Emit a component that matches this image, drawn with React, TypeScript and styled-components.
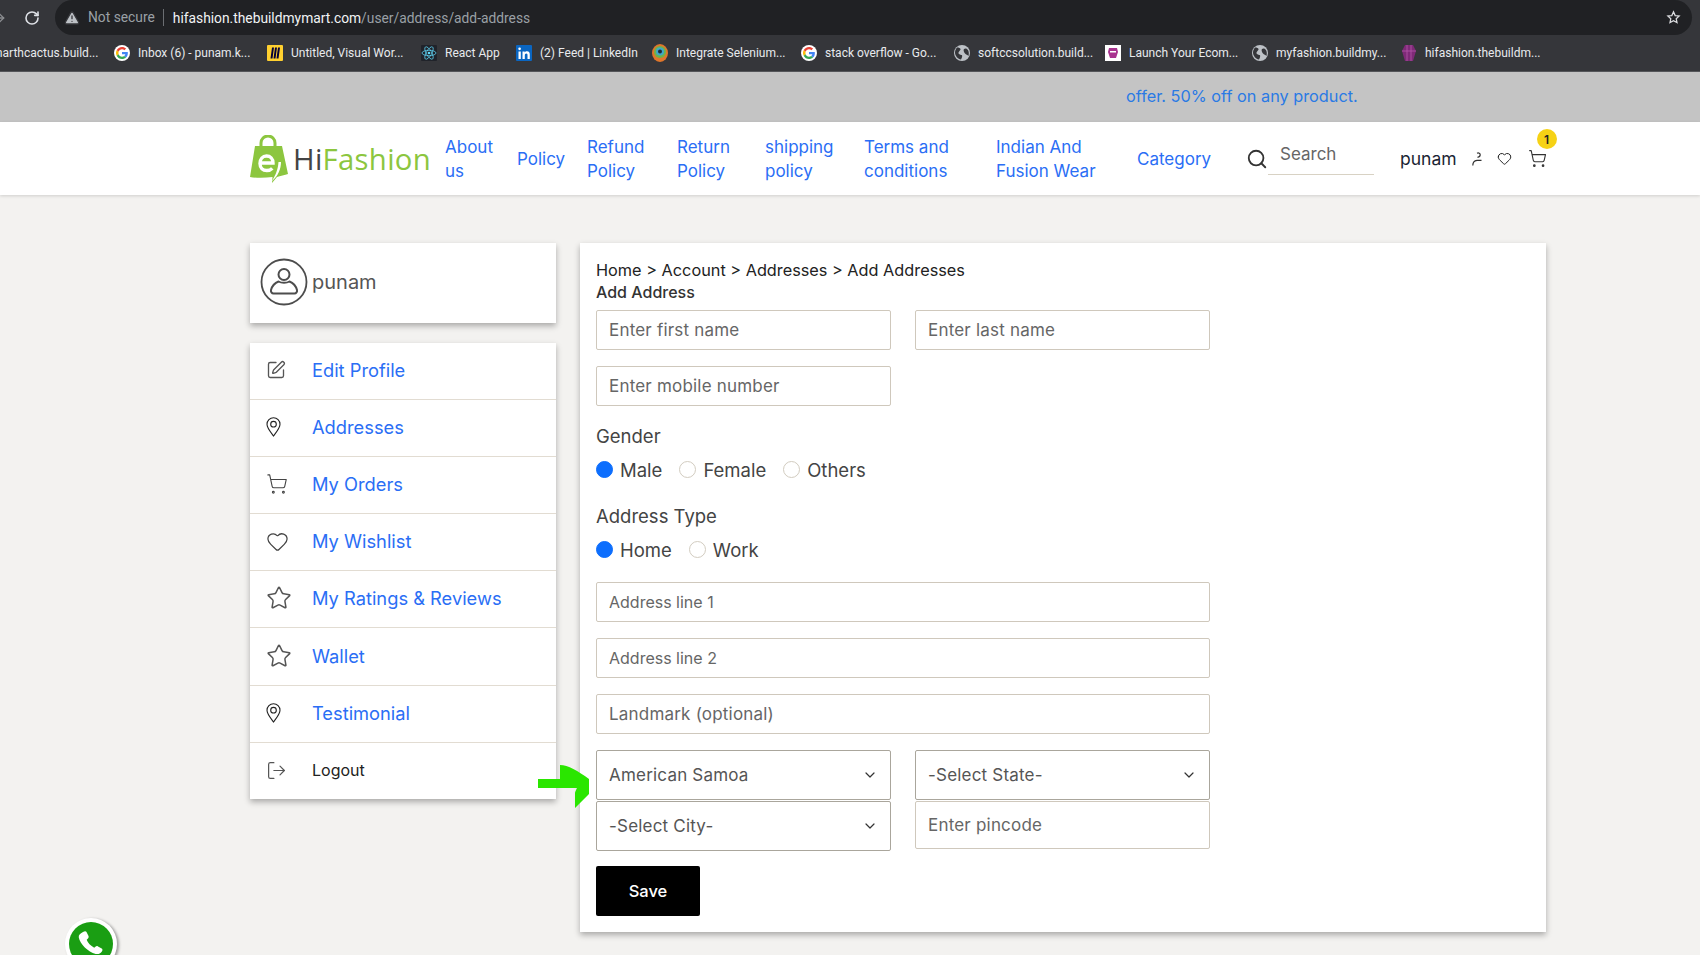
import React from 'react';
import styled, { createGlobalStyle } from 'styled-components';
import { Star, LogOut, SquarePen, RotateCw, TriangleAlert, ArrowRight, Heart, ShoppingCart, ChevronDown, Search } from 'lucide-react';

const font = `Inter, "Noto Sans", sans-serif`;

const GlobalStyle = createGlobalStyle`
  html, body { margin: 0; padding: 0; height: 955px; overflow: hidden; }
  body { background: #f3f2f0; font-family: ${font}; }
  * { box-sizing: border-box; }
`;

const GoogleIcon = () => (
  <svg width="16" height="16" viewBox="0 0 48 48">
    <circle cx="24" cy="24" r="24" fill="#fff" />
    <path fill="#EA4335" d="M24 13c3 0 5.400 1 7.300 2.800l5-5C33.200 7.900 29 6 24 6 17 6 10.900 10 8 15.900l5.900 4.600C15.300 16.200 19.300 13 24 13z" />
    <path fill="#4285F4" d="M41.500 24.500c0-1.300-.1-2.300-.3-3.500H24v6.800h10c-.4 2.200-1.700 4.100-3.600 5.300l5.700 4.400c3.400-3.100 5.400-7.600 5.400-13z" />
    <path fill="#FBBC05" d="M13.900 27.500c-.9-2.300-.9-4.700 0-7L8 15.900c-2.600 5-2.600 11.200 0 16.200z" />
    <path fill="#34A853" d="M24 42c4.900 0 9-1.600 12.100-4.500l-5.700-4.400c-1.600 1.100-3.700 1.800-6.400 1.800-4.700 0-8.700-3.200-10.100-7.400L8 32.100C10.900 38 17 42 24 42z" />
  </svg>
);

const MiroIcon = () => (
  <svg width="16" height="16" viewBox="0 0 16 16">
    <rect width="16" height="16" rx="1" fill="#ffd02f" />
    <path d="M5 2.500h2L5.500 13.500h-2L5 2.500zm3 0h2L8.500 13.500h-2L8 2.500zm3 0h2l-1.500 11h-2l1.500-11z" fill="#050038" />
  </svg>
);

const ReactIcon = () => (
  <svg width="16" height="16" viewBox="0 0 16 16">
    <rect width="16" height="16" rx="1" fill="#20232a" />
    <g fill="none" stroke="#61dafb" strokeWidth="0.7">
      <ellipse cx="8" cy="8" rx="7" ry="2.700" />
      <ellipse cx="8" cy="8" rx="7" ry="2.700" transform="rotate(60 8 8)" />
      <ellipse cx="8" cy="8" rx="7" ry="2.700" transform="rotate(120 8 8)" />
    </g>
    <circle cx="8" cy="8" r="1.300" fill="#61dafb" />
  </svg>
);

const LinkedInIcon = () => (
  <svg width="16" height="16" viewBox="0 0 16 16">
    <rect width="16" height="16" rx="1" fill="#0a66c2" />
    <path d="M2.500 6.500h2.300V14H2.500V6.500zM3.600 2.500a1.300 1.300 0 1 1 0 2.700 1.300 1.300 0 0 1 0-2.700zM6.500 6.500h2.200v1c.4-.7 1.200-1.200 2.300-1.200 2.200 0 2.800 1.400 2.800 3.400V14h-2.300v-3.800c0-1-.2-1.800-1.200-1.800s-1.500.8-1.500 1.800V14H6.500V6.500z" fill="#fff" />
  </svg>
);

const SeleniumIcon = () => (
  <svg width="16" height="18" viewBox="0 0 16 18">
    <ellipse cx="8" cy="9" rx="8" ry="9" fill="#e0762b" />
    <circle cx="8" cy="8" r="6" fill="#6fb24a" />
    <circle cx="8" cy="7.500" r="4" fill="#3fa6c9" />
    <circle cx="8" cy="7.500" r="2" fill="#1c2a3a" />
  </svg>
);

const GlobeIcon = () => (
  <svg width="16" height="16" viewBox="0 0 16 16">
    <circle cx="8" cy="8" r="8" fill="#bdc1c6" />
    <path d="M3 2.500c2 0 3 .5 3.500 1.500S5 6 4.500 7.500 6.500 10 7.500 10s1 2-.5 4.500C4 14 1 11 1 7.500c0-2 1-4 2-5zM10 4c1.500-1 3-.5 4 1 1 2 1 4 .5 6-1-1-2.500-1.500-3.500-2.500S9 5 10 4z" fill="#35363a" />
  </svg>
);

const LaunchIcon = () => (
  <svg width="16" height="16" viewBox="0 0 16 16">
    <rect width="16" height="16" fill="#fff" />
    <path d="M4 3h8l1 4-2 6H5L3 7l1-4z" fill="#a8338f" />
    <rect x="5" y="6" width="6" height="1.500" fill="#fff" />
  </svg>
);

const ShopIcon = () => (
  <svg width="16" height="18" viewBox="0 0 16 18">
    <path d="M4 1h8l3 6-3 10H4L1 7l3-6z" fill="#7f2a78" />
    <path d="M6 1v16M10 1v16M1 7h14" stroke="#b455a8" strokeWidth="0.800" />
  </svg>
);

const StarOutline = () => (
  <svg width="15" height="15" viewBox="0 0 24 24" fill="none" stroke="#dcdde0" strokeWidth="2">
    <path d="M12 3l2.700 5.900 6.300.7-4.700 4.300 1.300 6.300L12 17.100l-5.600 3.100 1.300-6.300L3 9.600l6.300-.7L12 3z" />
  </svg>
);

const Logo = () => (
  <LogoWrap>
    <svg width="38" height="48" viewBox="0 0 38 48">
      <path d="M11 14V8a7 7 0 0 1 14 0v6" fill="none" stroke="#8cc63f" strokeWidth="3" />
      <path d="M5 11h27l6 28c-3 1-8 2-11 3l-5 6 .5-6C15 43 6 43 0 42L5 11z" fill="#8cc63f" />
      <path d="M31 27c0 7-3 14-9 19 3-5 6-11 6.500-19H31z" fill="#fff" />
      <path d="M10 28h13c0-4.500-2.700-7-6.500-7S10 24 10 28.500s2.800 7 6.800 7c2.300 0 4.200-.8 5.500-2.200" fill="none" stroke="#fff" strokeWidth="3.400" />
    </svg>
    <LogoText>Hi<LogoAccent>Fashion</LogoAccent></LogoText>
  </LogoWrap>
);

const AvatarIcon = () => (
  <svg width="48" height="48" viewBox="0 0 48 48" fill="none" stroke="#4d4d4d" strokeWidth="1.800">
    <circle cx="24" cy="24" r="22.500" />
    <circle cx="24" cy="16.500" r="5.500" strokeWidth="2" />
    <path d="M18.500 23.500c-4 1.500-6.500 5-7.500 8.500-.4 1.700.8 3.500 2.500 3.500h21c1.700 0 2.900-1.800 2.500-3.500-1-3.500-3.500-7-7.500-8.500-3 1.800-8 1.800-11 0z" strokeWidth="2" />
  </svg>
);

const PinIcon = () => (
  <svg width="15" height="20" viewBox="0 0 15 20" fill="none" stroke="#222" strokeWidth="1.100">
    <path d="M7.500 19C4.500 15 1 11 1 7.300a6.500 6.500 0 0 1 13 0C14 11 10.500 15 7.500 19z" />
    <circle cx="7.500" cy="7.200" r="2.800" />
  </svg>
);

const GreenArrow = () => (
  <ArrowMark width="51" height="43" viewBox="0 0 51 43">
    <path d="M22 0c8 0 18 6 29 14v15L37 43V28c0-1 1-3 2-5H0V14h22V0z" fill="#2ae600" />
  </ArrowMark>
);

const WhatsAppBadge = () => (
  <WhatsApp>
    <svg width="44" height="44" viewBox="0 0 44 44">
      <circle cx="22" cy="22" r="22" fill="#1a9e13" />
      <path d="M14 10c1.500-1 3-1 3.500 0l2 4c.4 1 0 2-.8 2.800l-1 1c1 3 4 6 7.500 8l1.200-1.100c.8-.7 1.800-.8 2.600-.3l3.700 2.200c1 .6 1 2 0 3.200-1.500 1.800-3.500 2.700-6 2.100C19 30 11 22 9.800 15.500 9.400 13 11 11.500 14 10z" fill="#fff" />
    </svg>
  </WhatsApp>
);

const bookmarks = [
  { icon: <GoogleIcon />, label: 'Inbox (6) - punam.k...', w: 153 },
  { icon: <MiroIcon />, label: 'Untitled, Visual Wor...', w: 154 },
  { icon: <ReactIcon />, label: 'React App', w: 95 },
  { icon: <LinkedInIcon />, label: '(2) Feed | LinkedIn', w: 136 },
  { icon: <SeleniumIcon />, label: 'Integrate Selenium...', w: 149 },
  { icon: <GoogleIcon />, label: 'stack overflow - Go...', w: 153 },
  { icon: <GlobeIcon />, label: 'softccsolution.build...', w: 151 },
  { icon: <LaunchIcon />, label: 'Launch Your Ecom...', w: 147 },
  { icon: <GlobeIcon />, label: 'myfashion.buildmy...', w: 149 },
  { icon: <ShopIcon />, label: 'hifashion.thebuildm...', w: 140 },
];

const navItems = [
  { label: 'About us', w: 72 },
  { label: 'Policy', w: 70 },
  { label: 'Refund Policy', w: 90 },
  { label: 'Return Policy', w: 88 },
  { label: 'shipping policy', w: 99 },
  { label: 'Terms and conditions', w: 132 },
  { label: 'Indian And Fusion Wear', w: 141 },
  { label: 'Category', w: 109 },
];

const menu = [
  { icon: <SquarePen size={20} color="#555" strokeWidth={1.6} />, label: 'Edit Profile' },
  { icon: <PinIcon />, label: 'Addresses' },
  { icon: <ShoppingCart size={22} color="#444" strokeWidth={1.2} />, label: 'My Orders' },
  { icon: <Heart size={23} color="#444" strokeWidth={1.3} />, label: 'My Wishlist' },
  { icon: <Star size={26} color="#555" strokeWidth={1.4} />, label: 'My Ratings & Reviews' },
  { icon: <Star size={26} color="#555" strokeWidth={1.4} />, label: 'Wallet', tall: true },
  { icon: <PinIcon />, label: 'Testimonial' },
  { icon: <LogOut size={21} color="#555" strokeWidth={1.4} />, label: 'Logout', dark: true },
];

const App: React.FC = () => {
  return (
    <>
      <GlobalStyle />
      <Toolbar>
        <ForwardArrow><ArrowRight size={16} color="#8b8d90" /></ForwardArrow>
        <RotateCw size={16} color="#dee1e6" strokeWidth={2.4} />
        <AddressBar>
          <TriangleAlert size={16} color="#35363a" fill="#bdc1c6" />
          <NotSecure>Not secure</NotSecure>
          <UrlHost>hifashion.thebuildmymart.com<UrlPath>/user/address/add-address</UrlPath></UrlHost>
          <StarSlot><StarOutline /></StarSlot>
        </AddressBar>
      </Toolbar>
      <BookmarkBar>
        <FirstBookmark>marthcactus.build...</FirstBookmark>
        {bookmarks.map((b) => (
          <Bookmark key={b.label} $w={b.w}>
            {b.icon}
            <span>{b.label}</span>
          </Bookmark>
        ))}
      </BookmarkBar>
      <Banner>offer. 50% off on any product.</Banner>
      <Header>
        <HeaderInner>
          <Logo />
          <Nav>
            {navItems.map((n) => (
              <NavItem key={n.label} $w={n.w}>{n.label}</NavItem>
            ))}
          </Nav>
          <SearchBox>
            <Search size={24} color="#333" strokeWidth={2} />
            <SearchInput placeholder="Search" />
          </SearchBox>
          <UserName>punam</UserName>
          <UserIcon width="10" height="14" viewBox="0 0 10 14" fill="none" stroke="#333" strokeWidth="1.200">
            <path d="M5 1.200c1.800-.7 3.200.3 3.200 1.600S7 5.200 5.500 5.400" />
            <path d="M.8 13.500c0-3 1.600-5 4.200-5.200h4.500" />
          </UserIcon>
          <HeartSlot><Heart size={15} color="#222" strokeWidth={1.6} /></HeartSlot>
          <CartSlot>
            <ShoppingCart size={19} color="#333" strokeWidth={1.4} />
            <CartBadge>1</CartBadge>
          </CartSlot>
        </HeaderInner>
      </Header>
      <Content>
        <Sidebar>
          <ProfileCard>
            <AvatarIcon />
            <ProfileName>punam</ProfileName>
          </ProfileCard>
          <MenuCard>
            {menu.map((m) => (
              <MenuRow key={m.label} $tall={m.tall}>
                <MenuIcon>{m.icon}</MenuIcon>
                <MenuLabel $dark={m.dark}>{m.label}</MenuLabel>
              </MenuRow>
            ))}
          </MenuCard>
        </Sidebar>
        <MainCard>
          <Crumbs>Home &gt; Account &gt; Addresses &gt; Add Addresses</Crumbs>
          <Title>Add Address</Title>
          <FieldRow>
            <Field placeholder="Enter first name" />
            <Field placeholder="Enter last name" />
          </FieldRow>
          <FieldRow>
            <Field placeholder="Enter mobile number" />
          </FieldRow>
          <GroupLabel>Gender</GroupLabel>
          <RadioRow>
            <RadioOption $on>Male</RadioOption>
            <RadioOption>Female</RadioOption>
            <RadioOption>Others</RadioOption>
          </RadioRow>
          <GroupLabel>Address Type</GroupLabel>
          <RadioRow>
            <RadioOption $on>Home</RadioOption>
            <RadioOption>Work</RadioOption>
          </RadioRow>
          <WideStack>
            <WideField $tight placeholder="Address line 1" />
            <WideField $tight placeholder="Address line 2" />
            <WideField placeholder="Landmark (optional)" />
          </WideStack>
          <SelectGrid>
            <ArrowHolder>
              <GreenArrow />
              <SelectBox><SelectText>American Samoa</SelectText><ChevronDown size={16} color="#333" strokeWidth={1.8} /></SelectBox>
            </ArrowHolder>
            <SelectBox><SelectText>-Select State-</SelectText><ChevronDown size={16} color="#333" strokeWidth={1.8} /></SelectBox>
            <SelectBox><SelectText>-Select City-</SelectText><ChevronDown size={16} color="#333" strokeWidth={1.8} /></SelectBox>
            <PinField placeholder="Enter pincode" />
          </SelectGrid>
          <SaveButton>Save</SaveButton>
        </MainCard>
      </Content>
      <WhatsAppBadge />
    </>
  );
};

const Toolbar = styled.div`
  height: 35px;
  background: #35363a;
  display: flex;
  align-items: center;
  padding-left: 24px;
  position: relative;
`;

const ForwardArrow = styled.span`
  position: absolute;
  left: -9px;
  top: 10px;
`;

const AddressBar = styled.div`
  height: 35px;
  margin-left: 15px;
  width: 1637px;
  background: #202124;
  border-radius: 18px;
  display: flex;
  align-items: center;
  padding-left: 9px;
`;

const NotSecure = styled.span`
  font-family: Roboto, sans-serif;
  font-size: 13.800px;
  color: #9aa0a6;
  margin-left: 8px;
  padding-right: 8px;
  border-right: 1px solid #6b6e72;
  line-height: 17px;
`;

const UrlHost = styled.span`
  font-family: Roboto, sans-serif;
  font-size: 13.800px;
  color: #f1f3f4;
  margin-left: 9px;
  flex: 1;
`;

const UrlPath = styled.span`
  color: #9aa0a6;
`;

const StarSlot = styled.span`
  display: flex;
  margin-right: 11px;
`;

const BookmarkBar = styled.div`
  height: 37px;
  background: #35363a;
  border-bottom: 1px solid #55565a;
  display: flex;
  align-items: center;
  overflow: hidden;
`;

const FirstBookmark = styled.span`
  font-family: Roboto, sans-serif;
  font-size: 12px;
  color: #e8eaed;
  width: 122px;
  flex: none;
  margin-left: -8px;
`;

const Bookmark = styled.div<{ $w: number }>`
  width: ${(p) => p.$w}px;
  flex: none;
  display: flex;
  align-items: center;
  gap: 8px;
  font-family: Roboto, sans-serif;
  font-size: 12px;
  color: #e8eaed;
  white-space: nowrap;
`;

const Banner = styled.div`
  height: 50px;
  background: #c4c4c4;
  color: #2a7ae4;
  font-size: 16.300px;
  line-height: 48px;
  padding-left: 1126px;
`;

const Header = styled.header`
  height: 73px;
  background: #fff;
  box-shadow: 0 1px 3px rgba(0, 0, 0, 0.15);
  padding-left: 250px;
  position: relative;
`;

const HeaderInner = styled.div`
  width: 1296px;
  height: 100%;
  display: flex;
  align-items: center;
`;

const LogoWrap = styled.div`
  width: 195px;
  flex: none;
  display: flex;
  align-items: center;
`;

const LogoText = styled.span`
  font-family: "Open Sans", sans-serif;
  font-size: 29.300px;
  color: #444;
  margin-left: 5px;
  letter-spacing: 0.300px;
`;

const LogoAccent = styled.span`
  color: #8cc63f;
`;

const Nav = styled.nav`
  display: flex;
  align-items: center;
  flex: none;
`;

const NavItem = styled.a<{ $w: number }>`
  width: ${(p) => p.$w}px;
  flex: none;
  padding-right: 14px;
  font-size: 17px;
  line-height: 24px;
  color: #2a6ef5;
`;

const SearchBox = styled.div`
  display: flex;
  align-items: center;
  width: 128px;
  flex: none;
`;

const SearchInput = styled.input`
  width: 106px;
  height: 38px;
  border: 0;
  border-bottom: 1px solid #d8d2c4;
  padding: 0 0 2px 12px;
  margin-top: -6px;
  font-family: ${font};
  font-size: 17px;
  outline: none;
  background: transparent;
  &::placeholder { color: #666; }
`;

const UserName = styled.span`
  margin-left: 26px;
  font-size: 17.500px;
  color: #1a2433;
  flex: none;
`;

const UserIcon = styled.svg`
  margin-left: 15px;
  flex: none;
`;

const HeartSlot = styled.span`
  display: flex;
  margin-left: 15px;
  flex: none;
`;

const CartSlot = styled.span`
  display: flex;
  margin-left: 16px;
  position: relative;
  flex: none;
`;

const CartBadge = styled.span`
  position: absolute;
  top: -20px;
  left: 9px;
  width: 20px;
  height: 20px;
  border-radius: 50%;
  background: #f6d215;
  color: #222;
  font-size: 12px;
  font-weight: 600;
  display: flex;
  align-items: center;
  justify-content: center;
`;

const Content = styled.main`
  display: flex;
  align-items: flex-start;
  gap: 24px;
  padding: 48px 0 0 250px;
`;

const Sidebar = styled.aside`
  width: 306px;
  display: flex;
  flex-direction: column;
  gap: 20px;
`;

const ProfileCard = styled.div`
  height: 80px;
  background: #fff;
  box-shadow: 0 3px 6px rgba(0, 0, 0, 0.3);
  display: flex;
  align-items: center;
  padding: 0 0 2px 10px;
`;

const ProfileName = styled.span`
  margin-left: 4px;
  font-size: 20px;
  color: #555;
`;

const MenuCard = styled.div`
  background: #fff;
  box-shadow: 0 3px 6px rgba(0, 0, 0, 0.3);
`;

const MenuRow = styled.div<{ $tall?: boolean }>`
  height: ${(p) => (p.$tall ? 58 : 57)}px;
  display: flex;
  align-items: center;
  padding: 0 0 2px 16px;
  border-bottom: 1px solid #e2dcd2;
  &:last-child { border-bottom: 0; height: 56px; }
`;

const MenuIcon = styled.span`
  width: 46px;
  flex: none;
  display: flex;
`;

const MenuLabel = styled.span<{ $dark?: boolean }>`
  font-size: ${(p) => (p.$dark ? 16 : 18.300)}px;
  color: ${(p) => (p.$dark ? '#222' : '#2a6ef5')};
`;

const MainCard = styled.section`
  width: 966px;
  background: #fff;
  box-shadow: 0 3px 6px rgba(0, 0, 0, 0.3);
  padding: 16px;
`;

const Crumbs = styled.div`
  font-size: 16.300px;
  line-height: 22px;
  color: #222;
`;

const Title = styled.div`
  font-size: 16px;
  font-weight: 500;
  line-height: 22px;
  color: #333;
`;

const FieldRow = styled.div`
  display: flex;
  gap: 24px;
  margin-top: 7px;
  & + & { margin-top: 16px; }
`;

const Field = styled.input<{ $tight?: boolean }>`
  width: 295px;
  height: 40px;
  border: 1px solid #cfc8bc;
  border-radius: 2px;
  padding: 0 12px;
  font-family: ${font};
  font-size: ${(p) => (p.$tight ? 16 : 17)}px;
  letter-spacing: ${(p) => (p.$tight ? 0 : 0.2)}px;
  outline: none;
  background: #fff;
  &::placeholder { color: #666; }
`;

const GroupLabel = styled.div`
  margin-top: 18px;
  font-size: 18.500px;
  line-height: 24px;
  color: #444;
  & ~ & { margin-top: 22px; }
`;

const RadioRow = styled.div`
  display: flex;
  gap: 17px;
  margin-top: 10px;
  height: 24px;
  align-items: center;
`;

const RadioOption = styled.label<{ $on?: boolean }>`
  display: flex;
  align-items: center;
  font-size: 18.500px;
  color: #444;
  &::before {
    content: '';
    width: 15px;
    height: 15px;
    margin: -2px 7px 0 0;
    border-radius: 50%;
    background: ${(p) => (p.$on ? '#0d6efd' : '#fff')};
    border: 1px solid ${(p) => (p.$on ? '#0d6efd' : '#d2ccc0')};
  }
`;

const WideStack = styled.div`
  display: flex;
  flex-direction: column;
  gap: 16px;
  margin-top: 20px;
`;

const WideField = styled(Field)`
  width: 614px;
`;

const SelectGrid = styled.div`
  display: grid;
  grid-template-columns: 295px 295px;
  column-gap: 24px;
  row-gap: 1px;
  align-items: start;
  margin-top: 16px;
`;

const ArrowHolder = styled.div`
  position: relative;
`;

const ArrowMark = styled.svg`
  position: absolute;
  left: -58px;
  top: 15px;
  z-index: 1;
`;

const SelectBox = styled.div`
  height: 50px;
  background: #fff;
  border: 1px solid #aaa69c;
  border-radius: 2px;
  padding: 0 12px 0 12px;
  display: flex;
  align-items: center;
  justify-content: space-between;
`;

const SelectText = styled.span`
  font-size: 17px;
  letter-spacing: 0.2px;
  color: #555;
`;

const PinField = styled(Field)`
  height: 48px;
`;

const SaveButton = styled.button`
  display: block;
  width: 104px;
  height: 50px;
  margin-top: 15px;
  padding-bottom: 2px;
  border: 0;
  border-radius: 2px;
  background: #000;
  color: #fff;
  font-family: ${font};
  font-size: 16.500px;
  font-weight: 500;
`;

const WhatsApp = styled.div`
  position: fixed;
  left: 65px;
  top: 918px;
  width: 52px;
  height: 52px;
  padding: 4px;
  border-radius: 50%;
  background: #fff;
  box-shadow: 2px 1px 3px rgba(0, 0, 0, 0.35);
`;

export default App;
